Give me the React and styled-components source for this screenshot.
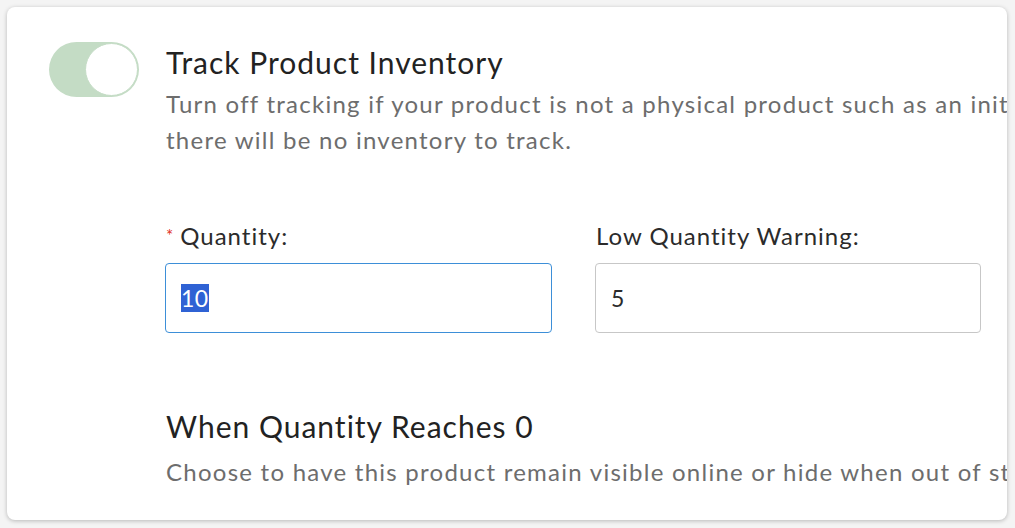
import React, { useEffect, useRef } from 'react';
import styled, { createGlobalStyle } from 'styled-components';

const GlobalStyle = createGlobalStyle`
  html, body {
    margin: 0;
    padding: 0;
    background: #f4f4f4;
  }
  body {
    font-family: Lato, "Open Sans", sans-serif;
    overflow: hidden;
  }
`;

const Page = styled.div`
  width: 1015px;
  height: 528px;
  padding: 7px 8px 8px 7px;
  box-sizing: border-box;
`;

const Card = styled.div`
  height: 100%;
  background: #fff;
  border-radius: 8px;
  box-shadow: 0 1px 4px rgba(0, 0, 0, 0.25);
  overflow: hidden;
  display: flex;
  gap: 27px;
  padding: 35px 0 0 42px;
  box-sizing: border-box;
`;

const Toggle = styled.div`
  flex: 0 0 auto;
  width: 90px;
  height: 55px;
  border-radius: 28px;
  background: #c4dcc5;
  display: flex;
  justify-content: ${p => (p.on ? 'flex-end' : 'flex-start')};
  align-items: center;
  padding: 1px;
  box-sizing: border-box;
`;

const Knob = styled.div`
  width: 53px;
  height: 53px;
  border-radius: 50%;
  background: #fff;
  border: 1.5px solid #c4dcc5;
  box-sizing: border-box;
`;

const Content = styled.div`
  flex: 1;
  min-width: 0;
  white-space: nowrap;
`;

const Heading = styled.h2`
  margin: ${p => p.top || 0}px 0 0;
  font-size: 30px;
  font-weight: 400;
  letter-spacing: 1px;
  line-height: 36px;
  color: #222;
`;

const Hint = styled.p`
  margin: ${p => p.top || 6}px 0 0;
  font-size: 24px;
  letter-spacing: 1.25px;
  line-height: 36px;
  color: #6d6d6d;
`;

const Fields = styled.div`
  display: grid;
  grid-template-columns: 387px 386px;
  column-gap: 43px;
  margin-top: 64px;
  margin-left: -1px;
`;

const Field = styled.label`
  display: flex;
  flex-direction: column;
  gap: 13px;
`;

const LabelText = styled.span`
  padding-left: 1px;
  font-size: 24px;
  letter-spacing: 1px;
  line-height: 28px;
  color: #2b2b2b;
`;

const Required = styled.span`
  color: #e0311f;
  font-size: 17px;
  vertical-align: top;
  margin-right: 6px;
`;

const Input = styled.input`
  height: 70px;
  box-sizing: border-box;
  border: 1px solid ${p => (p.active ? '#3d8fd8' : '#c7c7c7')};
  border-radius: 4px;
  padding: 0 15px;
  font-family: inherit;
  font-size: 23px;
  letter-spacing: 0.5px;
  color: #2b2b2b;
  outline: none;
  background: #fff;

  &::selection {
    background: #2f62d4;
    color: #fff;
  }
`;

export default function App() {
  const qty = useRef(null);

  useEffect(() => {
    if (qty.current) {
      qty.current.focus();
      qty.current.select();
    }
  }, []);

  return (
    <>
      <GlobalStyle />
      <Page>
        <Card>
          <Toggle on>
            <Knob />
          </Toggle>
          <Content>
            <Heading top={2}>Track Product Inventory</Heading>
            <Hint>
              Turn off tracking if your product is not a physical product such as an initial consultation,
              <br />
              there will be no inventory to track.
            </Hint>
            <Fields>
              <Field>
                <LabelText>
                  <Required>*</Required>Quantity:
                </LabelText>
                <Input ref={qty} active defaultValue="10" />
              </Field>
              <Field>
                <LabelText>Low Quantity Warning:</LabelText>
                <Input defaultValue="5" />
              </Field>
            </Fields>
            <Heading top={75}>When Quantity Reaches 0</Heading>
            <Hint top={10}>Choose to have this product remain visible online or hide when out of stock.</Hint>
          </Content>
        </Card>
      </Page>
    </>
  );
}
